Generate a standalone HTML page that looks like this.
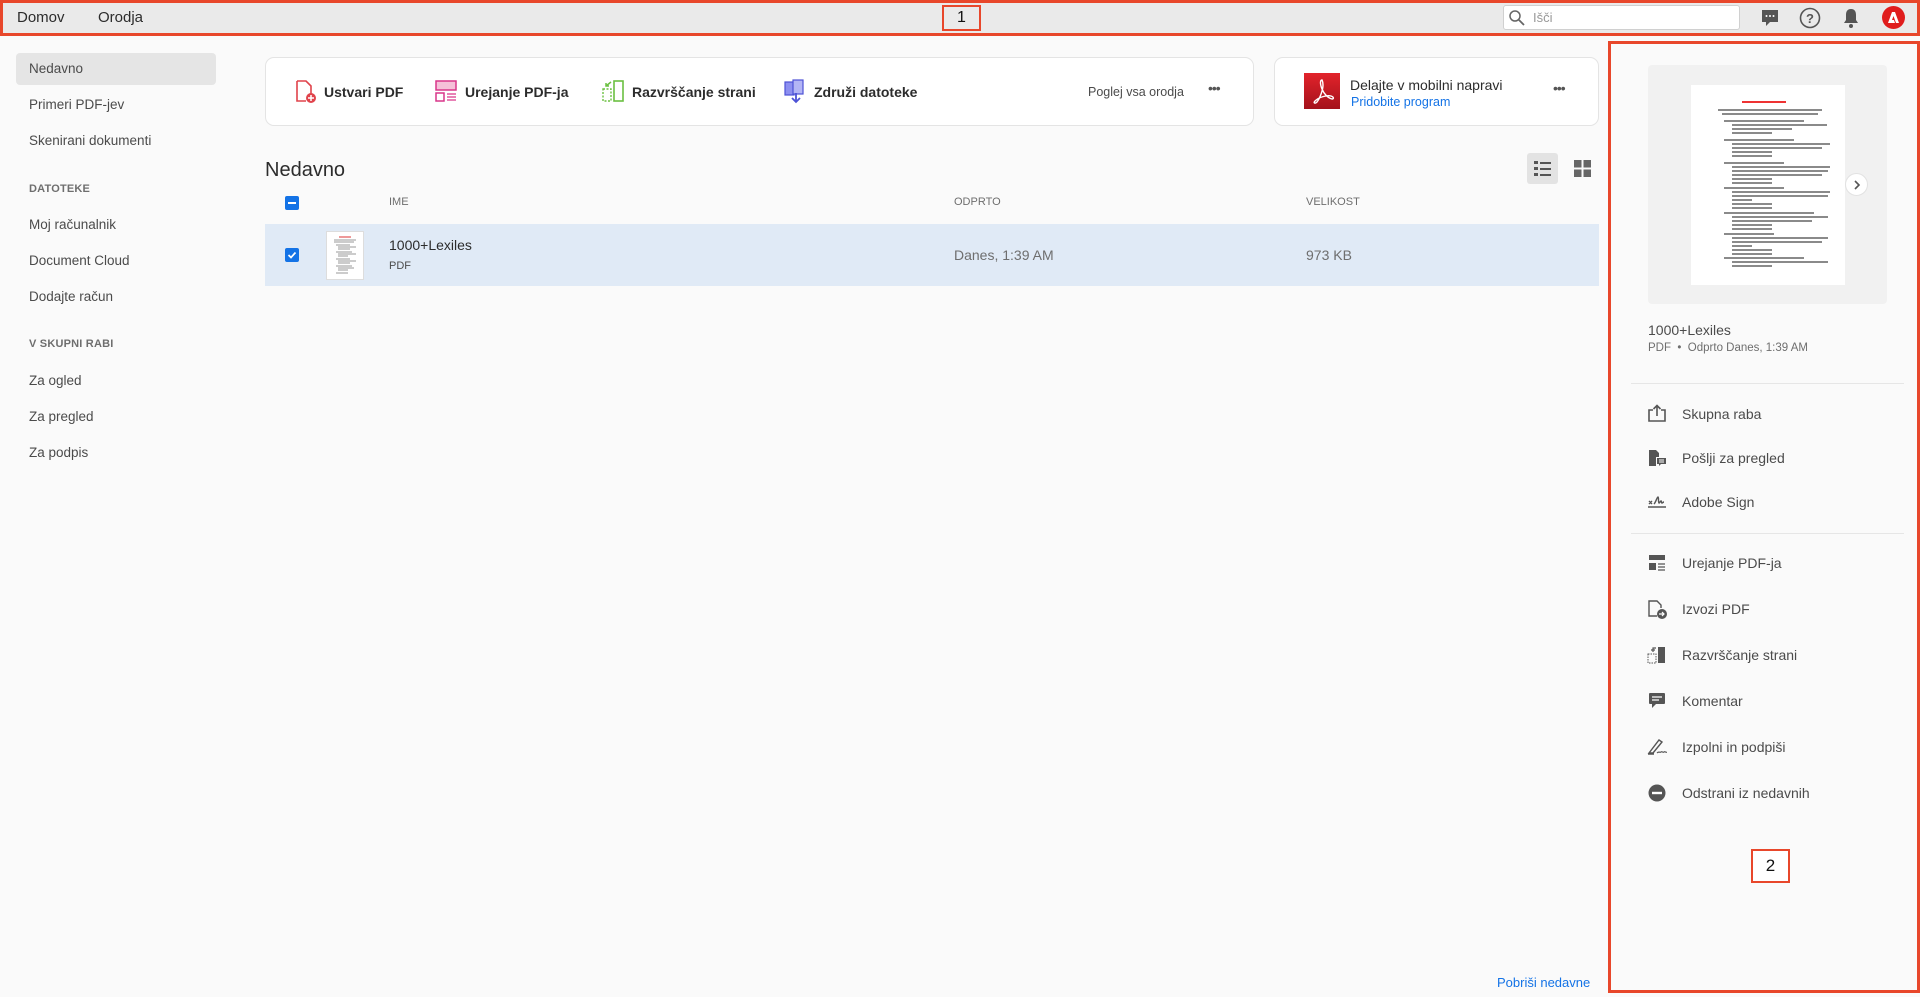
<!DOCTYPE html>
<html><head><meta charset="utf-8"><style>
*{box-sizing:border-box;margin:0;padding:0}
body{width:1920px;height:997px;background:#fafafa;font-family:"Liberation Sans",sans-serif;color:#4b4b4b;position:relative;overflow:hidden}
.a{position:absolute;white-space:nowrap}
.top{left:0;top:0;width:1920px;height:36px;background:#eaeaea;border:3px solid #e8472b}
.side{font-size:13.5px;color:#4b4b4b}
.hd{font-size:11px;font-weight:bold;color:#6e6e6e;letter-spacing:.2px}
.card{background:#fff;border:1px solid #e4e4e4;border-radius:9px}
.tl{font-size:14px;font-weight:bold;color:#2c2c2c}
.ri{font-size:14px;color:#4b4b4b}
.line{background:#e6e6e6;height:1px}
</style></head><body>
<div class="a top"></div>
<div class="a" style="left:17px;top:9px;font-size:15px;color:#2c2c2c">Domov</div>
<div class="a" style="left:98px;top:9px;font-size:15px;color:#2c2c2c">Orodja</div>
<div class="a" style="left:942px;top:5px;width:39px;height:26px;border:2px solid #e8472b;text-align:center;font-size:16px;line-height:22px;color:#111">1</div>
<div class="a" style="left:1503px;top:5px;width:237px;height:25px;background:#fff;border:1px solid #d0d0d0;border-radius:3px"></div>
<svg class="a" style="left:1508px;top:9px" width="18" height="18" viewBox="0 0 18 18"><circle cx="7" cy="7" r="5" fill="none" stroke="#666" stroke-width="1.5"/><path d="M11 11l5 5" stroke="#666" stroke-width="1.8"/></svg>
<div class="a" style="left:1533px;top:10px;font-size:13px;color:#999">Išči</div>
<svg class="a" style="left:1760px;top:8px" width="20" height="20" viewBox="0 0 20 20"><path d="M2 2h16v12h-8l-4 4v-4H2z" fill="#555"/><circle cx="6.5" cy="8" r="1" fill="#fff"/><circle cx="10" cy="8" r="1" fill="#fff"/><circle cx="13.5" cy="8" r="1" fill="#fff"/></svg>
<svg class="a" style="left:1799px;top:7px" width="22" height="22" viewBox="0 0 22 22"><circle cx="11" cy="11" r="9.5" fill="none" stroke="#555" stroke-width="1.6"/><text x="11" y="16" font-size="13" text-anchor="middle" fill="#555" font-family="Liberation Sans" font-weight="bold">?</text></svg>
<svg class="a" style="left:1842px;top:7px" width="18" height="22" viewBox="0 0 18 22"><path d="M9 2c-4 0-5 3-5 6v5l-2 3h14l-2-3V8c0-3-1-6-5-6z" fill="#555"/><circle cx="9" cy="19" r="2" fill="#555"/></svg>
<div class="a" style="left:1882px;top:6px;width:23px;height:23px;border-radius:50%;background:#e01d1d"></div>
<svg class="a" style="left:1886px;top:10px" width="15" height="15" viewBox="0 0 15 15"><path d="M2 13L6 2h3l4 11h-3L7.5 6 6 10h2l1 3z" fill="#fff"/></svg>

<div class="a" style="left:16px;top:53px;width:200px;height:32px;background:#e5e5e5;border-radius:4px"></div>
<div class="a side" style="left:29px;top:61px">Nedavno</div>
<div class="a side" style="left:29px;top:97px">Primeri PDF-jev</div>
<div class="a side" style="left:29px;top:133px">Skenirani dokumenti</div>
<div class="a hd" style="left:29px;top:183px">DATOTEKE</div>
<div class="a side" style="left:29px;top:217px">Moj računalnik</div>
<div class="a side" style="left:29px;top:253px">Document Cloud</div>
<div class="a side" style="left:29px;top:289px">Dodajte račun</div>
<div class="a hd" style="left:29px;top:338px">V SKUPNI RABI</div>
<div class="a side" style="left:29px;top:373px">Za ogled</div>
<div class="a side" style="left:29px;top:409px">Za pregled</div>
<div class="a side" style="left:29px;top:445px">Za podpis</div>

<div class="a card" style="left:265px;top:57px;width:989px;height:69px"></div>
<svg class="a" style="left:295px;top:80px" width="22" height="24" viewBox="0 0 22 24"><path d="M2 1h9l5 5v8" fill="none" stroke="#e0434b" stroke-width="1.6"/><path d="M2 1v20h9" fill="none" stroke="#e0434b" stroke-width="1.6"/><circle cx="16" cy="18" r="5" fill="#e0434b"/><path d="M16 15v6M13 18h6" stroke="#fff" stroke-width="1.5"/></svg>
<div class="a tl" style="left:324px;top:84px">Ustvari PDF</div>
<svg class="a" style="left:435px;top:80px" width="22" height="22" viewBox="0 0 22 22"><rect x="1" y="1" width="20" height="9" fill="#f5c0d8" stroke="#d9368a" stroke-width="1.5"/><rect x="1" y="13" width="8" height="8" fill="none" stroke="#d9368a" stroke-width="1.5"/><path d="M12 14h9M12 17h9M12 20h9" stroke="#d9368a" stroke-width="1.3"/></svg>
<div class="a tl" style="left:465px;top:84px">Urejanje PDF-ja</div>
<svg class="a" style="left:602px;top:80px" width="22" height="22" viewBox="0 0 22 22"><rect x="12" y="1" width="9" height="20" fill="none" stroke="#6bc041" stroke-width="1.6"/><rect x="1" y="9" width="8" height="12" fill="none" stroke="#6bc041" stroke-width="1.4" stroke-dasharray="2 1.5"/><path d="M9 2L4 6M4 3v3h3" fill="none" stroke="#6bc041" stroke-width="1.5"/></svg>
<div class="a tl" style="left:632px;top:84px">Razvrščanje strani</div>
<svg class="a" style="left:784px;top:79px" width="22" height="26" viewBox="0 0 22 26"><rect x="1" y="3" width="9" height="13" fill="#8c8ff0" stroke="#4d52d6" stroke-width="1.2"/><rect x="9" y="1" width="10" height="14" fill="#b3b5f5" stroke="#4d52d6" stroke-width="1.2"/><path d="M12 14v9M8 19l4 4 4-4" fill="none" stroke="#4d52d6" stroke-width="1.8"/></svg>
<div class="a tl" style="left:814px;top:84px">Združi datoteke</div>
<div class="a" style="left:1088px;top:85px;font-size:12.5px;color:#4b4b4b">Poglej vsa orodja</div>
<div class="a" style="left:1208px;top:80px;font-size:14px;color:#555;letter-spacing:-1px">•••</div>

<div class="a card" style="left:1274px;top:57px;width:325px;height:69px"></div>
<div class="a" style="left:1304px;top:73px;width:36px;height:36px;background:linear-gradient(#e2232b,#a4121b)"></div>
<svg class="a" style="left:1307px;top:76px" width="30" height="30" viewBox="0 0 30 30"><path d="M15 4c-2 0-2 4 0 9 2 5 6 9 10 10 2 0 2-2-1-3-4-1-12 1-16 5-2 2 0 3 2 1 3-4 6-12 6-17 0-3-1-5-1-5z" fill="none" stroke="#fff" stroke-width="1.4"/></svg>
<div class="a" style="left:1350px;top:77px;font-size:14px;color:#2c2c2c">Delajte v mobilni napravi</div>
<div class="a" style="left:1351px;top:95px;font-size:12.5px;color:#1473e6">Pridobite program</div>
<div class="a" style="left:1553px;top:80px;font-size:14px;color:#555;letter-spacing:-1px">•••</div>

<div class="a" style="left:265px;top:159px;font-size:20px;color:#2c2c2c">Nedavno</div>
<div class="a" style="left:1527px;top:153px;width:31px;height:31px;background:#e3e3e3;border-radius:3px"></div>
<svg class="a" style="left:1534px;top:160px" width="17" height="17" viewBox="0 0 17 17"><path d="M0 1h4v3H0zM6 2h11v2H6zM0 7h4v3H0zM6 8h11v2H6zM0 13h4v3H0zM6 14h11v2H6z" fill="#555"/></svg>
<svg class="a" style="left:1574px;top:160px" width="17" height="17" viewBox="0 0 17 17"><path d="M0 0h7.5v7.5H0zM9.5 0H17v7.5H9.5zM0 9.5h7.5V17H0zM9.5 9.5H17V17H9.5z" fill="#666"/></svg>

<div class="a" style="left:285px;top:196px;width:14px;height:14px;background:#1473e6;border-radius:2px"></div>
<div class="a" style="left:288px;top:202px;width:8px;height:2px;background:#fff"></div>
<div class="a" style="left:389px;top:196px;font-size:11px;color:#6e6e6e">IME</div>
<div class="a" style="left:954px;top:196px;font-size:11px;color:#6e6e6e">ODPRTO</div>
<div class="a" style="left:1306px;top:196px;font-size:11px;color:#6e6e6e">VELIKOST</div>

<div class="a" style="left:265px;top:224px;width:1334px;height:62px;background:#e0eaf6"></div>
<div class="a" style="left:285px;top:248px;width:14px;height:14px;background:#1473e6;border-radius:2px"></div>
<svg class="a" style="left:286px;top:249px" width="12" height="12" viewBox="0 0 12 12"><path d="M2.5 6l2.5 2.5 4.5-5" fill="none" stroke="#fff" stroke-width="1.7"/></svg>
<div class="a" style="left:326px;top:231px;width:38px;height:49px;background:#fff;border:1px solid #ddd"></div>
<svg class="a" style="left:331px;top:236px" width="28" height="40" viewBox="0 0 28 40"><path d="M8 1h12" stroke="#d33" stroke-width="1"/><g stroke="#777" stroke-width=".8"><path d="M3 4h22M3 6h20M5 9h14M7 11h18M7 13h12M5 16h16M7 18h18M7 20h10M5 23h14M7 25h18M7 27h12M5 30h16M7 32h16M7 34h10M5 37h12"/></g></svg>
<div class="a" style="left:389px;top:237px;font-size:14px;color:#2c2c2c">1000+Lexiles</div>
<div class="a" style="left:389px;top:260px;font-size:11px;color:#4b4b4b">PDF</div>
<div class="a" style="left:954px;top:247px;font-size:14px;color:#6e6e6e">Danes, 1:39 AM</div>
<div class="a" style="left:1306px;top:247px;font-size:14px;color:#6e6e6e">973 KB</div>

<div class="a" style="left:1497px;top:975px;font-size:13px;color:#1473e6">Pobriši nedavne</div>

<div class="a" style="left:1608px;top:41px;width:312px;height:952px;border:3px solid #e8472b"></div>
<div class="a" style="left:1648px;top:65px;width:239px;height:239px;background:#f1f1f1;border-radius:4px"></div>
<div class="a" style="left:1691px;top:85px;width:154px;height:200px;background:#fff"></div>
<svg class="a" style="left:1700px;top:100px" width="136" height="170" viewBox="0 0 136 170"><path d="M42 2h44" stroke="#e33" stroke-width="2"/><g stroke="#444" stroke-width="1.2"><path d="M18 10h104M22 14h96M24 21h80M32 25h95M32 29h60M32 33h40M24 40h70M32 44h98M32 48h90M32 52h40M32 56h40M24 63h60M32 67h98M32 71h96M32 75h90M32 79h40M32 83h40M24 88h60M32 92h98M32 96h96M32 100h20M32 104h40M32 108h40M24 113h90M32 117h96M32 121h80M32 125h40M32 129h40M24 134h50M32 138h96M32 142h90M32 146h20M32 150h40M32 154h40M24 158h80M32 162h96M32 166h40"/></g></svg>
<div class="a" style="left:1845px;top:173px;width:23px;height:23px;border-radius:50%;background:#fff;border:1px solid #e2e2e2"></div>
<svg class="a" style="left:1852px;top:180px" width="10" height="10" viewBox="0 0 10 10"><path d="M3 1l4 4-4 4" fill="none" stroke="#555" stroke-width="1.6"/></svg>
<div class="a" style="left:1648px;top:322px;font-size:14px;color:#4b4b4b">1000+Lexiles</div>
<div class="a" style="left:1648px;top:342px;font-size:11.5px;color:#6e6e6e">PDF &nbsp;•&nbsp; Odprto Danes, 1:39 AM</div>
<div class="a line" style="left:1631px;top:383px;width:273px"></div>
<div class="a line" style="left:1631px;top:533px;width:273px"></div>

<svg class="a" style="left:1648px;top:404px" width="18" height="18" viewBox="0 0 18 18"><path d="M5 6H1v11h16V6h-4" fill="none" stroke="#555" stroke-width="1.6"/><path d="M9 12V2M5.5 5L9 1.5 12.5 5" fill="none" stroke="#555" stroke-width="1.6"/></svg>
<div class="a ri" style="left:1682px;top:406px">Skupna raba</div>
<svg class="a" style="left:1648px;top:449px" width="18" height="18" viewBox="0 0 18 18"><path d="M1 1h7l3 3v4H8v9H1z" fill="#555"/><path d="M9 9h9v6h-5l-2 2v-2H9z" fill="#555"/><path d="M11 11h5M11 13h5" stroke="#fff" stroke-width="1"/></svg>
<div class="a ri" style="left:1682px;top:450px">Pošlji za pregled</div>
<svg class="a" style="left:1648px;top:493px" width="18" height="18" viewBox="0 0 18 18"><path d="M1 8l3 3M4 8l-3 3M6 11c2-2 3-7 4-7s0 6 1 6 1-2 2-2 0 2 1 2 1-1 2-1" fill="none" stroke="#555" stroke-width="1.4"/><path d="M0 14h18" stroke="#555" stroke-width="1.5"/></svg>
<div class="a ri" style="left:1682px;top:494px">Adobe Sign</div>
<svg class="a" style="left:1648px;top:554px" width="18" height="18" viewBox="0 0 18 18"><path d="M1 1h16v5H1zM1 9h7v7H1z" fill="#555"/><path d="M10 10h7M10 13h7M10 16h7" stroke="#555" stroke-width="1.3"/></svg>
<div class="a ri" style="left:1682px;top:555px">Urejanje PDF-ja</div>
<svg class="a" style="left:1648px;top:600px" width="19" height="19" viewBox="0 0 19 19"><path d="M9 16H1V1h8l4 4v3" fill="none" stroke="#555" stroke-width="1.4"/><circle cx="14" cy="14" r="5" fill="#555"/><path d="M11 14h5M14 12l2 2-2 2" fill="none" stroke="#fff" stroke-width="1.2"/></svg>
<div class="a ri" style="left:1682px;top:601px">Izvozi PDF</div>
<svg class="a" style="left:1647px;top:646px" width="19" height="18" viewBox="0 0 19 18"><rect x="11" y="1" width="7" height="16" fill="#555"/><rect x="1" y="8" width="8" height="9" fill="none" stroke="#555" stroke-width="1" stroke-dasharray="1.5 1"/><path d="M9 2H6v4M4 4h4" fill="none" stroke="#555" stroke-width="1.2"/></svg>
<div class="a ri" style="left:1682px;top:647px">Razvrščanje strani</div>
<svg class="a" style="left:1648px;top:692px" width="18" height="18" viewBox="0 0 18 18"><path d="M2 1h14a1 1 0 011 1v9a1 1 0 01-1 1H8l-4 4v-4H2a1 1 0 01-1-1V2a1 1 0 011-1z" fill="#555"/><path d="M4 5h10M4 8h7" stroke="#fff" stroke-width="1.3"/></svg>
<div class="a ri" style="left:1682px;top:693px">Komentar</div>
<svg class="a" style="left:1647px;top:737px" width="20" height="18" viewBox="0 0 20 18"><path d="M2 16L12 3l3 2L6 16zM1 17h6" fill="none" stroke="#555" stroke-width="1.4"/><path d="M10 16c2-2 3 0 4-1s2 1 3 0 2 1 3 0" fill="none" stroke="#555" stroke-width="1.2"/></svg>
<div class="a ri" style="left:1682px;top:739px">Izpolni in podpiši</div>
<svg class="a" style="left:1648px;top:784px" width="18" height="18" viewBox="0 0 18 18"><circle cx="9" cy="9" r="8.5" fill="#555"/><path d="M4 9h10" stroke="#fff" stroke-width="2.4"/></svg>
<div class="a ri" style="left:1682px;top:785px">Odstrani iz nedavnih</div>

<div class="a" style="left:1751px;top:849px;width:39px;height:34px;border:2px solid #e8472b;background:#fff;text-align:center;font-size:17px;line-height:30px;color:#111">2</div>
</body></html>
